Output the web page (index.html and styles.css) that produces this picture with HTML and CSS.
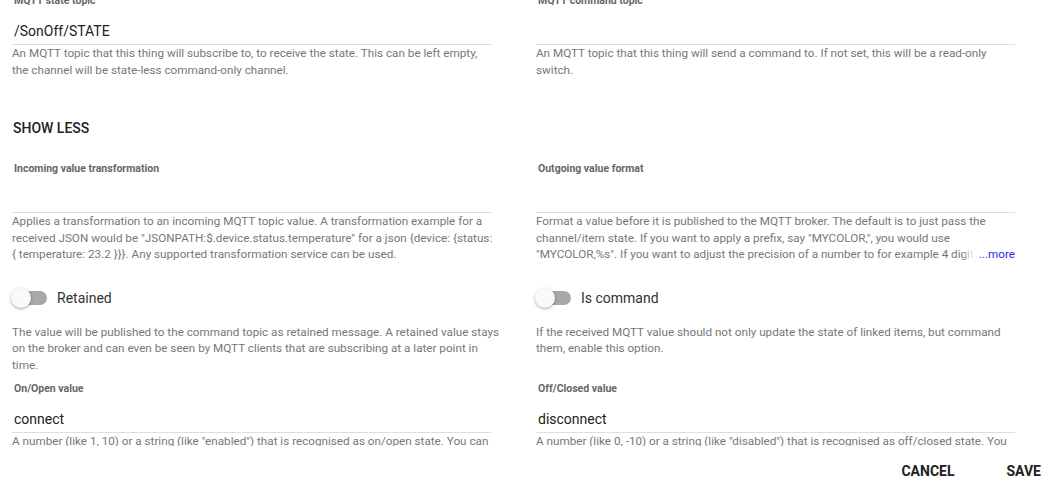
FILE: index.html
```html
<!DOCTYPE html>
<html>
<head>
<meta charset="utf-8">
<link rel="stylesheet" href="styles.css">
</head>
<body>
<div class="dialog">
  <div class="scroll">
    <div class="inner">
      <div class="row">
        <div class="field">
          <div class="label">MQTT state topic</div>
          <div class="input">/SonOff/STATE</div>
          <div class="desc">An MQTT topic that this thing will subscribe to, to receive the state. This can be left empty,<br>the channel will be state-less command-only channel.</div>
        </div>
        <div class="field">
          <div class="label">MQTT command topic</div>
          <div class="input"></div>
          <div class="desc">An MQTT topic that this thing will send a command to. If not set, this will be a read-only<br>switch.</div>
        </div>
      </div>

      <div class="show-less">SHOW LESS</div>

      <div class="row row-transform">
        <div class="field">
          <div class="label">Incoming value transformation</div>
          <div class="input"></div>
          <div class="desc">Applies a transformation to an incoming MQTT topic value. A transformation example for a<br>received JSON would be "JSONPATH:$.device.status.temperature" for a json {device: {status:<br>{ temperature: 23.2 }}}. Any supported transformation service can be used.</div>
        </div>
        <div class="field">
          <div class="label">Outgoing value format</div>
          <div class="input"></div>
          <div class="desc clamp">Format a value before it is published to the MQTT broker. The default is to just pass the<br>channel/item state. If you want to apply a prefix, say "MYCOLOR,", you would use<br>"MYCOLOR,%s". If you want to adjust the precision of a number to for example 4 digits, you would use "%.4f".<span class="more">...more</span></div>
        </div>
      </div>

      <div class="row row-toggles">
        <div class="field">
          <div class="toggle">
            <span class="switch"><span class="thumb"></span></span>
            <span class="toggle-label">Retained</span>
          </div>
          <div class="desc toggle-desc">The value will be published to the command topic as retained message. A retained value stays<br>on the broker and can even be seen by MQTT clients that are subscribing at a later point in<br>time.</div>
        </div>
        <div class="field">
          <div class="toggle">
            <span class="switch"><span class="thumb"></span></span>
            <span class="toggle-label">Is command</span>
          </div>
          <div class="desc toggle-desc">If the received MQTT value should not only update the state of linked items, but command<br>them, enable this option.</div>
        </div>
      </div>

      <div class="row row-values">
        <div class="field">
          <div class="label">On/Open value</div>
          <div class="input">connect</div>
          <div class="desc">A number (like 1, 10) or a string (like "enabled") that is recognised as on/open state. You can<br>use this parameter for a second keyword, next to ON (OPEN respectively on a Contact).</div>
        </div>
        <div class="field">
          <div class="label">Off/Closed value</div>
          <div class="input">disconnect</div>
          <div class="desc">A number (like 0, -10) or a string (like "disabled") that is recognised as off/closed state. You<br>can use this parameter for a second keyword, next to OFF (CLOSED respectively on a Contact).</div>
        </div>
      </div>
    </div>
  </div>
  <div class="actions">
    <button class="btn">CANCEL</button>
    <button class="btn">SAVE</button>
  </div>
</div>
</body>
</html>
```

FILE: styles.css
```css
html, body {
  margin: 0;
  padding: 0;
  background: #ffffff;
}

body {
  font-family: Roboto, "Liberation Sans", Arial, sans-serif;
  color: #212121;
}

.dialog {
  width: 1047px;
  height: 484px;
  display: flex;
  flex-direction: column;
}

.scroll {
  height: 446px;
  overflow: hidden;
  flex: none;
}

.inner {
  margin-top: -8px;
  padding-left: 12px;
}

.row {
  display: grid;
  grid-template-columns: 479px 479px;
  column-gap: 45px;
}

.field {
  display: flex;
  flex-direction: column;
  position: relative;
  min-width: 0;
}

.label {
  margin-top: 1px;
  font-size: 10.5px;
  font-weight: 700;
  line-height: 16px;
  height: 16px;
  color: #666666;
  padding-left: 2px;
}

.input {
  margin-top: 7px;
  height: 27px;
  padding-top: 1px;
  line-height: 28px;
  font-size: 14px;
  color: #212121;
  border-bottom: 1px solid #dedede;
  padding-left: 2px;
}

.desc {
  font-size: 11.7px;
  line-height: 16.5px;
  color: #777777;
  margin-right: -40px;
}

.clamp {
  max-height: 49.5px;
  overflow: hidden;
  position: relative;
  margin-right: 0;
}

.more {
  position: absolute;
  right: 0;
  bottom: 0;
  line-height: 16.5px;
  padding-left: 18px;
  color: #2a2ae8;
  background: linear-gradient(to right, rgba(255,255,255,0), #ffffff 14px);
}

.show-less {
  margin-top: 40px;
  font-size: 14px;
  font-weight: 500;
  line-height: 20px;
  color: #212121;
  padding-left: 1px;
}

.row-transform {
  margin-top: 22px;
}

.row-toggles {
  margin-top: 23px;
}

.toggle {
  display: flex;
  align-items: center;
  height: 24px;
}

.switch {
  position: relative;
  width: 34px;
  height: 14px;
  border-radius: 7px;
  background: #a8a8a8;
  flex: none;
  margin-left: 1px;
}

.thumb {
  position: absolute;
  left: -2px;
  top: -3px;
  width: 20px;
  height: 20px;
  border-radius: 50%;
  background: #fafafa;
  box-shadow: 0 1px 3px rgba(0,0,0,0.35);
}

.toggle-label {
  margin-left: 10px;
  font-size: 14px;
  color: #333333;
}

.toggle-desc {
  margin-top: 14px;
}

.row-values {
  margin-top: 7px;
}

.actions {
  flex: 1;
  display: flex;
  justify-content: flex-end;
  align-items: flex-start;
  padding-top: 15px;
  padding-right: 6px;
  gap: 52px;
}

.btn {
  border: none;
  background: none;
  padding: 0;
  font-family: Roboto, "Liberation Sans", Arial, sans-serif;
  font-size: 14px;
  font-weight: 700;
  line-height: 20px;
  color: #212121;
  cursor: pointer;
}
```
